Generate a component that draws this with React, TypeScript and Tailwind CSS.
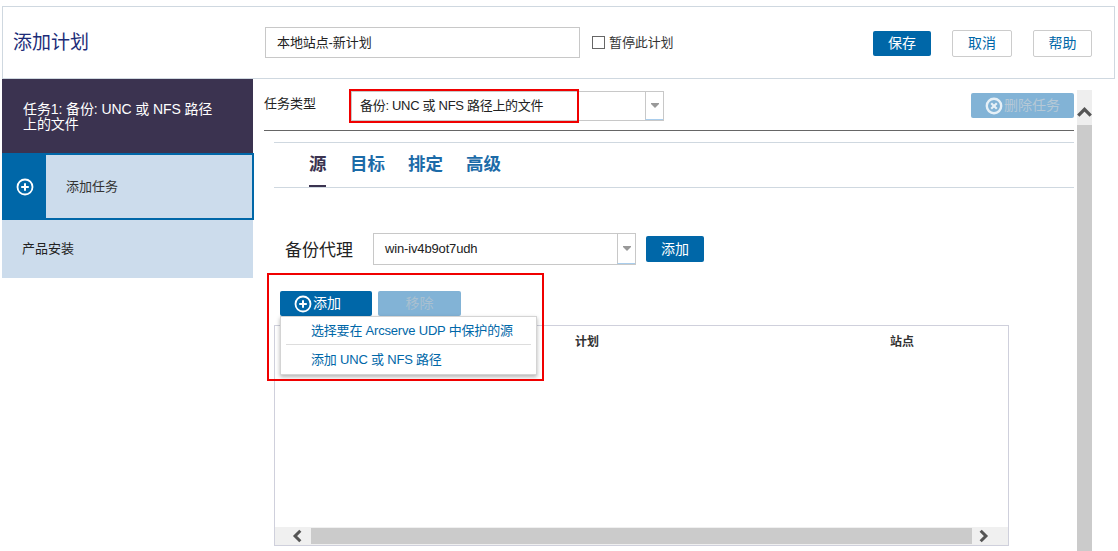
import React from 'react';

const FONT = 'font-["Liberation_Sans","Noto_Sans_CJK_SC",sans-serif]';

const PlusCircle = ({ size = 18 }: { size?: number }) => (
    <svg width={size} height={size} viewBox="0 0 18 18" fill="none" stroke="white">
        <circle cx="9" cy="9" r="7.5" strokeWidth="1.8" />
        <path d="M9 5.2v7.6M5.2 9h7.6" strokeWidth="2" />
    </svg>
);

const CrossCircle = () => (
    <svg width="18" height="18" viewBox="0 0 18 18" fill="none" stroke="#e6f0f7">
        <circle cx="9" cy="9" r="7.2" strokeWidth="2.4" />
        <path d="M6.2 6.2l5.6 5.6M11.8 6.2l-5.6 5.6" strokeWidth="2.2" />
    </svg>
);

const SelectBox = ({ text, className, textClass }: { text: string; className: string; textClass: string }) => (
    <div className={`flex border border-[#c8c8c8] bg-white ${className}`}>
        <div className={`flex-1 flex items-center text-[13px] text-[#222] ${textClass}`}>{text}</div>
        <div className="w-[18px] flex flex-col items-center justify-center border-l border-[#c8c8c8] border-b-[#a9cdec] border-b">
            <div className="w-[8px] h-[1px] bg-[#999]" />
            <div className="w-0 h-0 border-x-[4px] border-x-transparent border-t-[4px] border-t-[#999]" />
        </div>
    </div>
);

const Chevron = ({ d, size = 12 }: { d: string; size?: number }) => (
    <svg width={size} height={size} viewBox="0 0 12 12" fill="none" stroke="#555" strokeWidth="2.6">
        <path d={d} />
    </svg>
);

const App = () => {
    return (
        <div className={`relative w-[1118px] h-[551px] overflow-hidden bg-white pt-[6px] ${FONT}`}>
            <header className="ml-[2px] w-[1113px] h-[73px] border border-[#cfd8e0] flex items-center">
                <h1 className="ml-[10px] mt-[2px] w-[252px] text-[19px] font-normal text-[#1c2c78]">添加计划</h1>
                <div className="w-[315px] h-[31px] border border-[#c8c8c8] flex items-center pl-[11px] text-[13px] text-[#222] tracking-[-0.1px]">
                    本地站点-新计划
                </div>
                <div className="ml-[12px] w-[13px] h-[13px] border border-[#666]" />
                <span className="ml-[4px] w-[264px] text-[13px] text-[#333] tracking-[-0.1px]">暂停此计划</span>
                <button className="w-[58px] h-[25px] rounded-[2px] bg-[#0067a8] text-white text-[14px] mt-[1px]">保存</button>
                <button className="ml-[21px] w-[60px] h-[27px] rounded-[2px] border border-[#ccc] text-[#0067a8] text-[14px] mt-[1px]">取消</button>
                <button className="ml-[21px] w-[59px] h-[27px] rounded-[2px] border border-[#ccc] text-[#0067a8] text-[14px] mt-[1px]">帮助</button>
            </header>

            <div className="flex">
                <aside className="ml-[2px] w-[251px] shrink-0">
                    <div className="h-[74px] bg-[#3b3350] text-white text-[14px] leading-[15px] pl-[21px] pr-[40px] pt-[23px] tracking-[-0.1px]">
                        任务1: 备份: UNC 或 NFS 路径上的文件
                    </div>
                    <div className="flex h-[67px] -mr-px border-2 border-[#0067a8] bg-[#ccdcec]">
                        <div className="w-[42px] bg-[#0067a8] flex items-center justify-center">
                            <PlusCircle />
                        </div>
                        <div className="pl-[20px] flex items-center text-[13px] text-[#333]">添加任务</div>
                    </div>
                    <div className="h-[58px] bg-[#ccdcec] pl-[20px] flex items-center text-[13px] text-[#222]">产品安装</div>
                </aside>

                <main className="flex">
                    <div className="ml-[11px] w-[810px]">
                        <div className="h-[52px] border-b border-[#666] flex pt-[12px]">
                            <span className="w-[87px] text-[13px] text-[#222] pt-[4px] leading-[18px]">任务类型</span>
                            <SelectBox text="备份: UNC 或 NFS 路径上的文件" className="w-[313px] h-[30px]" textClass="pl-[8px] tracking-[-0.3px]" />
                            <button className="ml-[307px] mt-[2px] w-[103px] h-[25px] rounded-[2px] bg-[#82b3d6] text-[#b5c8d6] text-[14px] flex items-center justify-center gap-[1px]">
                                <CrossCircle />
                                删除任务
                            </button>
                        </div>

                        <div className="ml-[10px] mt-[11px] h-[46px] border-y border-[#cfd8e0] flex text-[17.5px] font-bold text-[#1c6ba8] pl-[35px]">
                            <span className="h-[44px] w-[17px] border-b-[2px] border-[#3b3350] text-[#3b3350] pt-[9px] leading-[24px] whitespace-nowrap">源</span>
                            <span className="ml-[24px] pt-[9px] leading-[24px]">目标</span>
                            <span className="ml-[23px] pt-[9px] leading-[24px]">排定</span>
                            <span className="ml-[23px] pt-[9px] leading-[24px]">高级</span>
                        </div>

                        <div className="mt-[45px] ml-[21px] flex items-center">
                            <span className="w-[88px] text-[17px] text-[#222] pt-[3px]">备份代理</span>
                            <SelectBox text="win-iv4b9ot7udh" className="w-[263px] h-[32px]" textClass="pl-[11px] tracking-[-0.15px]" />
                            <button className="ml-[10px] w-[58px] h-[26px] rounded-[2px] bg-[#0067a8] text-white text-[14px] pt-[1px]">添加</button>
                        </div>

                        <div className="relative mt-[26px] ml-[16px] flex gap-[6px]">
                            <button className="w-[92px] h-[25px] rounded-[2px] bg-[#0067a8] text-white text-[14px] flex items-center gap-[1px] pl-[14px]">
                                <PlusCircle />
                                添加
                            </button>
                            <button className="w-[83px] h-[25px] rounded-[2px] bg-[#82b3d6] text-[#a9c0d0] text-[14px]">移除</button>
                            <div className="absolute z-10 left-0 top-[25px] w-[257px] h-[59px] bg-white border border-[#d4d4d4] shadow-[0_2px_4px_rgba(0,0,0,0.3)] px-[5px] text-[13px] text-[#0067a8] tracking-[-0.2px]">
                                <div className="h-[28px] pl-[25px] flex items-center border-b border-[#ddd]">选择要在 Arcserve UDP 中保护的源</div>
                                <div className="h-[29px] pl-[25px] flex items-center">添加 UNC 或 NFS 路径</div>
                            </div>
                        </div>

                        <div className="mt-[9px] ml-[10px] w-[735px] h-[221px] border border-[#cfd0dc] flex flex-col">
                            <div className="flex-1 relative flex text-[12px] font-bold text-[#333] pt-[8px] leading-[16px]">
                                <span className="ml-[300px] w-[315px]">计划</span>
                                <span>站点</span>
                            </div>
                            <div className="h-[18px] bg-[#f0f0f0] flex items-center">
                                <div className="w-[36px] flex justify-center pl-[9px]"><Chevron d="M8 1.5L3.5 6 8 10.5" size={14} /></div>
                                <div className="w-[661px] h-[16px] bg-[#cbcbcb]" />
                                <div className="flex-1 flex justify-center pr-[14px]"><Chevron d="M4 1.5L8.5 6 4 10.5" size={14} /></div>
                            </div>
                        </div>
                    </div>

                    <div className="ml-[3px] mt-[11px] w-[15px] h-[461px] bg-[#cbcbcb]">
                        <div className="h-[35px] bg-[#eeeeee] flex items-center justify-center pt-[10px]">
                            <Chevron d="M1 8.5L6 3.5l5 5" size={15} />
                        </div>
                    </div>
                </main>
            </div>

            <div className="absolute left-[349px] top-[89px] w-[230px] h-[34px] border-2 border-[#f00000]" />
            <div className="absolute z-20 left-[267px] top-[273px] w-[277px] h-[108px] border-2 border-[#f00000]" />
        </div>
    );
};

export default App;
